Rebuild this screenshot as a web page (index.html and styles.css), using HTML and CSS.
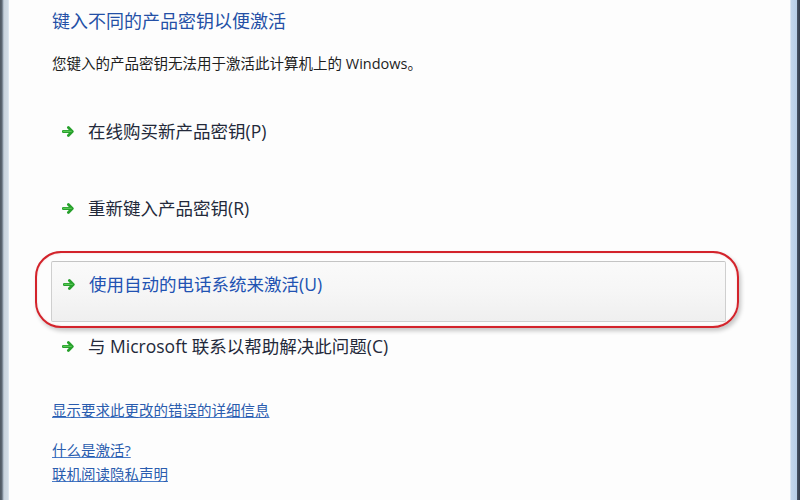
FILE: index.html
```html
<!DOCTYPE html>
<html lang="zh-CN">
<head>
<meta charset="utf-8">
<title>Windows 激活</title>
<link rel="stylesheet" href="styles.css">
</head>
<body>
<div class="window">
  <div class="frame-left"></div>
  <main class="content">
    <h1 class="title">键入不同的产品密钥以便激活</h1>
    <p class="message">您键入的产品密钥无法用于激活此计算机上的 Windows。</p>

    <div class="option opt-first">
      <svg class="arrow" viewBox="0 0 13 11" width="13" height="11"><path d="M1.2 5.5H10M6.4 1.6L10.3 5.5L6.4 9.4" fill="none" stroke="#27a02c" stroke-width="2.8" stroke-linecap="round" stroke-linejoin="round"/><path d="M1.5 5.3H9.3" stroke="#6ad865" stroke-width="0.9" stroke-linecap="round"/></svg>
      <span class="label">在线购买新产品密钥(P)</span>
    </div>

    <div class="option opt-second">
      <svg class="arrow" viewBox="0 0 13 11" width="13" height="11"><path d="M1.2 5.5H10M6.4 1.6L10.3 5.5L6.4 9.4" fill="none" stroke="#27a02c" stroke-width="2.8" stroke-linecap="round" stroke-linejoin="round"/><path d="M1.5 5.3H9.3" stroke="#6ad865" stroke-width="0.9" stroke-linecap="round"/></svg>
      <span class="label">重新键入产品密钥(R)</span>
    </div>

    <div class="option opt-hover">
      <svg class="arrow" viewBox="0 0 13 11" width="13" height="11"><path d="M1.2 5.5H10M6.4 1.6L10.3 5.5L6.4 9.4" fill="none" stroke="#27a02c" stroke-width="2.8" stroke-linecap="round" stroke-linejoin="round"/><path d="M1.5 5.3H9.3" stroke="#6ad865" stroke-width="0.9" stroke-linecap="round"/></svg>
      <span class="label">使用自动的电话系统来激活(U)</span>
      <div class="annotation"></div>
    </div>

    <div class="option opt-fourth">
      <svg class="arrow" viewBox="0 0 13 11" width="13" height="11"><path d="M1.2 5.5H10M6.4 1.6L10.3 5.5L6.4 9.4" fill="none" stroke="#27a02c" stroke-width="2.8" stroke-linecap="round" stroke-linejoin="round"/><path d="M1.5 5.3H9.3" stroke="#6ad865" stroke-width="0.9" stroke-linecap="round"/></svg>
      <span class="label">与 Microsoft 联系以帮助解决此问题(C)</span>
    </div>

    <a class="link link-details" href="#">显示要求此更改的错误的详细信息</a>
    <div class="links-bottom">
      <a class="link" href="#">什么是激活?</a>
      <a class="link" href="#">联机阅读隐私声明</a>
    </div>
  </main>
  <div class="frame-right"></div>
</div>
</body>
</html>
```

FILE: styles.css
```css
* { box-sizing: border-box; }

html, body {
  margin: 0;
  padding: 0;
  background: #ffffff;
}

body {
  font-family: "Open Sans", "Noto Sans CJK SC", sans-serif;
  color: #222;
}

.window {
  display: flex;
  width: 800px;
  height: 500px;
  overflow: hidden;
}

.frame-left {
  width: 9px;
  flex: none;
  background: linear-gradient(to right, #4d5660 0, #5e6874 2px, #9aa8b6 3px, #c9d3dd 4px, #d2dce6 8px, #e8f0f8 9px);
}

.frame-right {
  width: 10px;
  flex: none;
  background: linear-gradient(to right, #f4f8fc 0, #c4d8ee 1px, #b7cfe8 7px, #4a5668 7px, #2f3a4a 10px);
}

.content {
  flex: 1;
  padding-left: 43px;
  background: #fdfdfd;
  display: flex;
  flex-direction: column;
  align-items: flex-start;
}

.title {
  margin: 8px 0 0;
  font-family: "Noto Sans CJK SC", sans-serif;
  font-size: 18px;
  line-height: 24px;
  font-weight: normal;
  color: #2450a6;
}

.message {
  margin: 22px 0 0;
  font-size: 14.5px;
  line-height: 20px;
  color: #1e1e1e;
}

.option {
  display: flex;
  align-items: center;
  gap: 13px;
  padding-left: 10px;
  font-size: 17.5px;
  line-height: 24px;
  color: #23293a;
}

.arrow { flex: none; }

.opt-first { margin-top: 45px; }
.opt-second { margin-top: 53px; }

.opt-hover {
  position: relative;
  margin-top: 41px;
  margin-left: -1px;
  width: 675px;
  height: 61px;
  padding: 10px 0 0 11px;
  align-items: flex-start;
  border: 1px solid #cfcfcf;
  border-top-color: #c4c4c4;
  border-radius: 2px;
  background: linear-gradient(to bottom, #fafafa 0%, #f6f6f6 50%, #efefef 100%);
  color: #2152b2;
}

.opt-hover .arrow { margin-top: 7px; }

.annotation {
  position: absolute;
  top: -11px;
  left: -17px;
  right: -14px;
  bottom: -7px;
  border: 2px solid #d3232b;
  border-radius: 26px;
  box-shadow: 2px 3px 4px rgba(0, 0, 0, 0.22), inset 0 0 2px rgba(220, 120, 120, 0.35);
  pointer-events: none;
}

.opt-fourth { margin-top: 12px; }

.link {
  font-size: 14.5px;
  line-height: 24px;
  color: #2a5cae;
  text-decoration: underline;
  text-decoration-color: #4a7cc8;
}

.link-details { margin-top: 41px; }

.links-bottom {
  margin-top: 16px;
  display: flex;
  flex-direction: column;
  align-items: flex-start;
}
```
